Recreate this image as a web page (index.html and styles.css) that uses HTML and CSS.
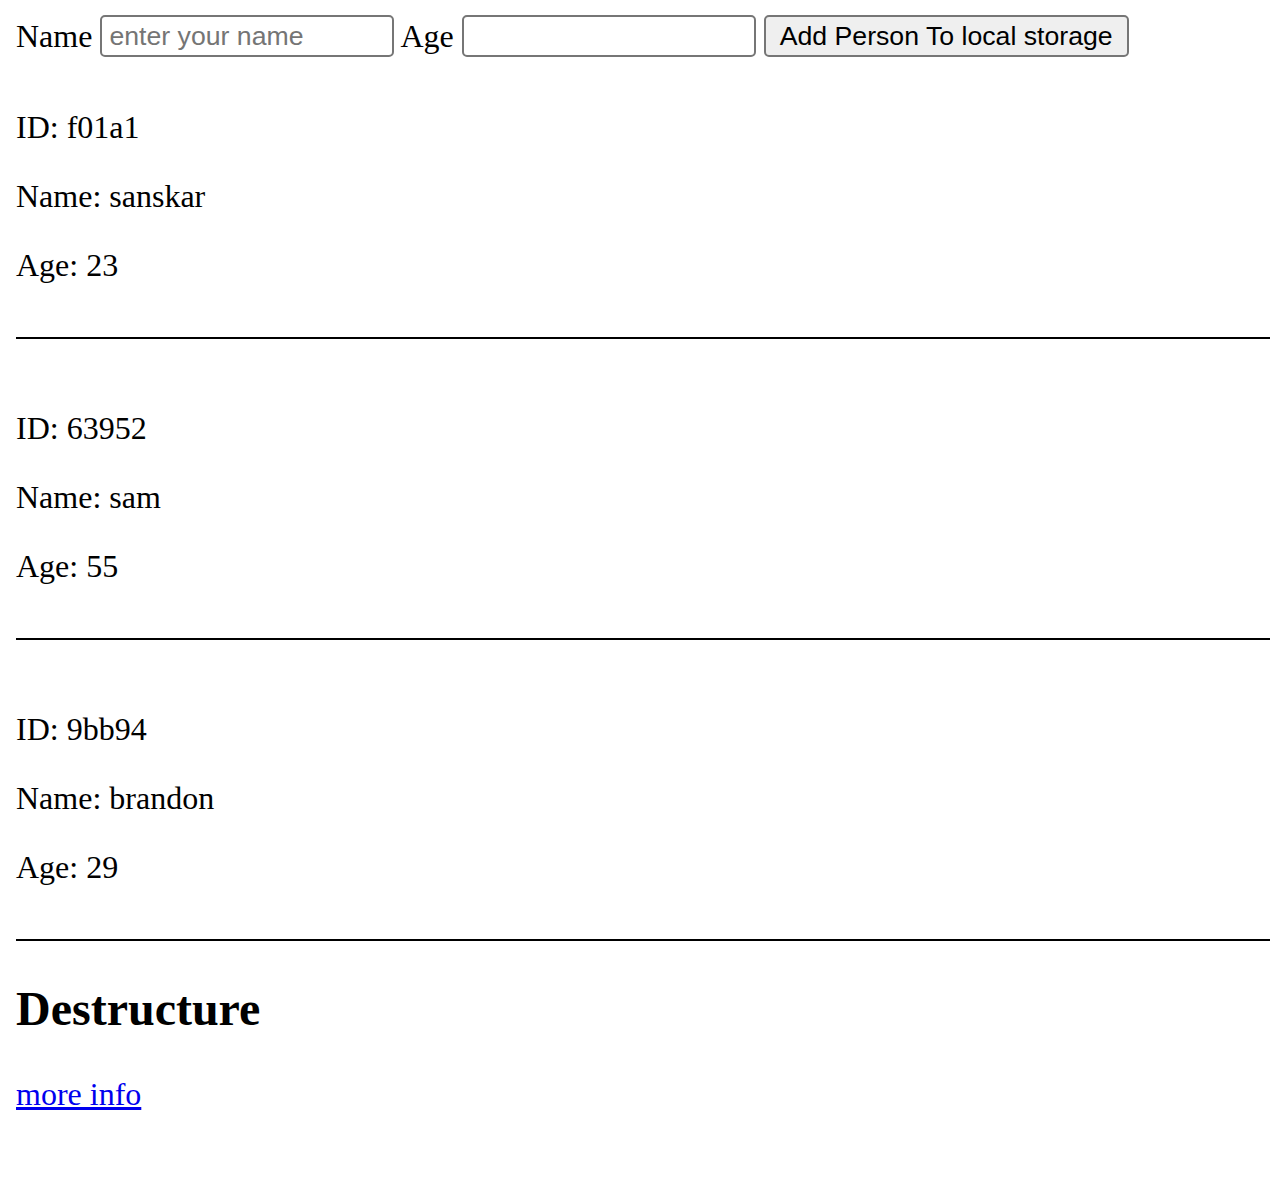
FILE: index.html
```html
<!DOCTYPE html>
<html lang="en">
<head>
<meta charset="utf-8">
<title>Destructure</title>
<link rel="stylesheet" href="styles.css">
</head>
<body>
<form class="add-form">
  <label class="label" for="name">Name</label>
  <input class="field" id="name" type="text" placeholder="enter your name">
  <label class="label label-age" for="age">Age</label>
  <input class="field" id="age" type="text">
  <button class="btn" type="button">Add Person To local storage</button>
</form>

<div class="person">
  <p class="line">ID: f01a1</p>
  <p class="line">Name: sanskar</p>
  <p class="line">Age: 23</p>
</div>
<hr class="rule">
<div class="person">
  <p class="line">ID: 63952</p>
  <p class="line">Name: sam</p>
  <p class="line">Age: 55</p>
</div>
<hr class="rule">
<div class="person">
  <p class="line">ID: 9bb94</p>
  <p class="line">Name: brandon</p>
  <p class="line">Age: 29</p>
</div>
<hr class="rule">

<h2 class="title">Destructure</h2>
<p class="line"><a class="link" href="#">more info</a></p>
</body>
</html>
```

FILE: styles.css
```css
html, body {
  background: #fff;
}
body {
  margin: 0;
  padding: 0 0 16px 16px;
  font-family: "Liberation Serif", "Times New Roman", serif;
  font-size: 32px;
  color: #000;
}
.add-form {
  display: flex;
  align-items: center;
  gap: 8px;
  height: 42px;
  margin: 15px 0 52px 0;
}
.label {
  font-size: 32px;
  line-height: normal;
}
.label-age {
  margin-left: -2px;
}
.field {
  box-sizing: border-box;
  width: 294px;
  height: 42px;
  margin: 0;
  padding: 0 7px;
  border: 2px solid #767676;
  border-radius: 5px;
  background: #fff;
  font-family: "Liberation Sans", Arial, sans-serif;
  font-size: 26.67px;
  color: #000;
  outline: none;
}
.field::placeholder {
  color: #757575;
}
.btn {
  box-sizing: border-box;
  height: 42px;
  margin: 0;
  padding: 0 14px;
  border: 2px solid #767676;
  border-radius: 5px;
  background: #efefef;
  font-family: "Liberation Sans", Arial, sans-serif;
  font-size: 26.67px;
  color: #000;
}
.line {
  margin: 32px 0;
  line-height: normal;
}
.person {
  margin-top: 71px;
}
.person:first-of-type {
  margin-top: 0;
}
.rule {
  margin: 53px 0 40px 0;
  height: 2px;
  border: 0;
  background: #000;
}
.title {
  font-size: 48px;
  font-weight: bold;
  margin: 39.84px 0;
  line-height: normal;
}
.link {
  color: #0000ee;
  text-decoration: underline;
}
```
